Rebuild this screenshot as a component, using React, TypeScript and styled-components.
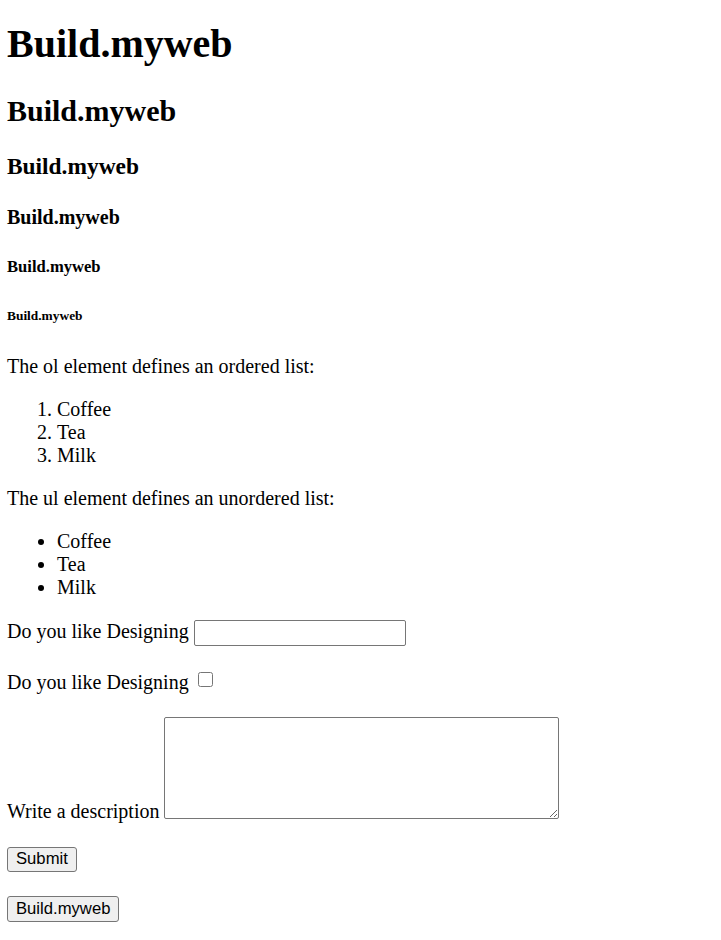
import React from "react";
import styled, { createGlobalStyle } from "styled-components";

const Global = createGlobalStyle`
  html, body { margin: 0; padding: 0; background: #ffffff; }
  body {
    font-family: "Liberation Serif", "Times New Roman", serif;
    font-size: 20px;
    color: #000000;
  }
`;

const Page = styled.main`
  padding: 0 7px 24px 7px;
  display: flow-root;
`;

const Heading = styled.h1<{ $size: number; $mt: number; $mb: number }>`
  font-family: "Liberation Serif", serif;
  font-weight: 700;
  font-size: ${(p) => p.$size}px;
  line-height: normal;
  margin: ${(p) => p.$mt}px 0 ${(p) => p.$mb}px 0;
`;

const Para = styled.p`
  margin: 20px 0;
  line-height: 23px;
`;

const List = styled.ol<{ $bullet?: boolean }>`
  margin: 20px 0 0 0;
  padding-left: 50px;
  list-style: ${(p) => (p.$bullet ? "disc" : "decimal")};
  line-height: 23px;
`;

const Form = styled.form`
  display: flex;
  flex-direction: column;
  align-items: flex-start;
`;

const Row = styled.div<{ $mt: number; $align?: string }>`
  display: flex;
  align-items: ${(p) => p.$align || "flex-start"};
  margin-top: ${(p) => p.$mt}px;
`;

const Label = styled.label<{ $mb?: number }>`
  line-height: 23px;
  white-space: pre;
  margin-bottom: ${(p) => p.$mb || 0}px;
`;

const TextInput = styled.input`
  box-sizing: border-box;
  width: 212px;
  height: 26px;
  margin: 0;
  padding: 1px 3px;
  border: 1px solid #767676;
  border-radius: 2px;
  background: #ffffff;
  font-family: "Liberation Sans", Arial, sans-serif;
  font-size: 16.67px;
`;

const Check = styled.input`
  box-sizing: border-box;
  width: 15px;
  height: 15px;
  margin: 1px 0 0 4px;
`;

const Area = styled.textarea`
  box-sizing: border-box;
  width: 395px;
  height: 102px;
  margin: 0;
  padding: 2px;
  border: 1px solid #767676;
  border-radius: 2px;
  font-family: "Liberation Mono", monospace;
  font-size: 16.67px;
  resize: both;
`;

const Button = styled.button<{ $h?: number }>`
  box-sizing: border-box;
  height: ${(p) => p.$h || 25}px;
  margin: 0;
  padding: 0 8px;
  border: 1px solid #767676;
  border-radius: 3px;
  background: #efefef;
  color: #000000;
  font-family: "Liberation Sans", Arial, sans-serif;
  font-size: 16.67px;
  line-height: 1;
`;

export default function App() {
  const headings: Array<{ as: "h1" | "h2" | "h3" | "h4" | "h5" | "h6"; size: number; mt: number; mb: number }> = [
    { as: "h1", size: 40, mt: 20, mb: 26.8 },
    { as: "h2", size: 30, mt: 24.9, mb: 24.9 },
    { as: "h3", size: 23.4, mt: 23.4, mb: 23.4 },
    { as: "h4", size: 20, mt: 26.6, mb: 26.6 },
    { as: "h5", size: 16.6, mt: 27.7, mb: 27.7 },
    { as: "h6", size: 13.4, mt: 31.2, mb: 31.2 },
  ];
  return (
    <>
      <Global />
      <Page>
        {headings.map((h) => (
          <Heading key={h.as} as={h.as} $size={h.size} $mt={h.mt} $mb={h.mb}>
            Build.myweb
          </Heading>
        ))}
        <Para>The ol element defines an ordered list:</Para>
        <List>
          <li>Coffee</li>
          <li>Tea</li>
          <li>Milk</li>
        </List>
        <Para>The ul element defines an unordered list:</Para>
        <List as="ul" $bullet>
          <li>Coffee</li>
          <li>Tea</li>
          <li>Milk</li>
        </List>
        <Form onSubmit={(e) => e.preventDefault()}>
          <Row $mt={20.5}>
            <Label htmlFor="like">Do you like Designing </Label>
            <TextInput id="like" type="text" />
          </Row>
          <Row $mt={25}>
            <Label htmlFor="likecb">Do you like Designing </Label>
            <Check id="likecb" type="checkbox" />
          </Row>
          <Row $mt={23} $align="flex-end">
            <Label htmlFor="desc" $mb={-4}>Write a description </Label>
            <Area id="desc" />
          </Row>
          <Row $mt={28}>
            <Button type="submit">Submit</Button>
          </Row>
          <Row $mt={24}>
            <Button type="button" $h={26}>Build.myweb</Button>
          </Row>
        </Form>
      </Page>
    </>
  );
}
